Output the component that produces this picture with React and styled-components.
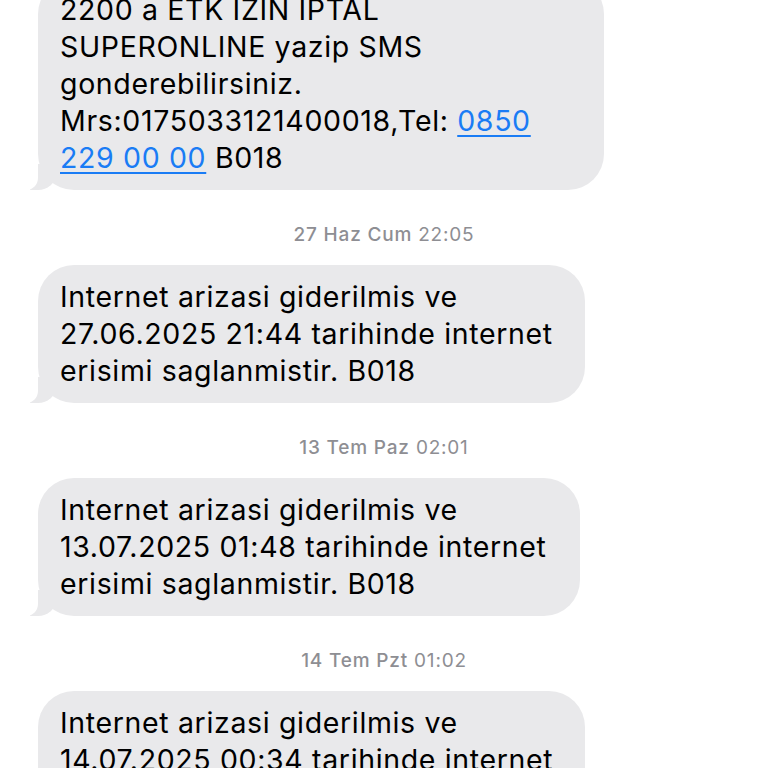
import styled, { createGlobalStyle } from "styled-components";

const GlobalStyle = createGlobalStyle`
  html, body {
    margin: 0;
    padding: 0;
    background: #ffffff;
    overflow: hidden;
  }
  body {
    font-family: Inter, "Noto Sans", "Liberation Sans", sans-serif;
  }
`;

const messages = [
  { stamp: ["27 Haz Cum", "22:05"], date: "27.06.2025 21:44", width: 547 },
  { stamp: ["13 Tem Paz", "02:01"], date: "13.07.2025 01:48", width: 542 },
  { stamp: ["14 Tem Pzt", "01:02"], date: "14.07.2025 00:34", width: 547 },
];

export default function App() {
  return (
    <>
      <GlobalStyle />
      <Thread>
        <Bubble $width={566}>
          2200 a ETK IZIN IPTAL
          <br />
          SUPERONLINE yazip SMS
          <br />
          gonderebilirsiniz.
          <br />
          Mrs:0175033121400018,Tel: <Link>0850</Link>
          <br />
          <Link>229 00 00</Link> B018
        </Bubble>

        {messages.map((m) => (
          <Group key={m.date}>
            <Stamp>
              <Day>{m.stamp[0]}</Day> {m.stamp[1]}
            </Stamp>
            <Bubble $width={m.width}>
              Internet arizasi giderilmis ve
              <br />
              {m.date} tarihinde internet
              <br />
              erisimi saglanmistir. B018
            </Bubble>
          </Group>
        ))}
      </Thread>
    </>
  );
}

const Thread = styled.div`
  display: flex;
  flex-direction: column;
  align-items: flex-start;
  margin-top: -22px;
  padding-left: 38px;
`;

const Group = styled.div`
  display: flex;
  flex-direction: column;
  align-items: flex-start;
  align-self: stretch;
`;

const Stamp = styled.div`
  align-self: stretch;
  margin: 34px 0 19px -38px;
  text-align: center;
  font-size: 19px;
  line-height: 22px;
  letter-spacing: 0.8px;
  color: #8e8e93;
`;

const Day = styled.span`
  font-weight: 500;
`;

const Bubble = styled.div`
  position: relative;
  box-sizing: border-box;
  width: ${(p) => p.$width}px;
  padding: 13px 22px 14px;
  background: #e9e9eb;
  border-radius: 36px;
  color: #000;
  font-size: 28.5px;
  line-height: 37px;
  letter-spacing: 0.65px;

  &::before {
    content: "";
    position: absolute;
    bottom: 0;
    left: -8px;
    width: 26px;
    height: 26px;
    background: #e9e9eb;
    border-bottom-right-radius: 18px 16px;
  }

  &::after {
    content: "";
    position: absolute;
    bottom: 0;
    left: -26px;
    width: 26px;
    height: 28px;
    background: #ffffff;
    border-bottom-right-radius: 12px;
  }
`;

const Link = styled.span`
  color: #1a7cf5;
  text-decoration: underline;
  text-underline-offset: 4px;
  text-decoration-thickness: 2px;
`;
